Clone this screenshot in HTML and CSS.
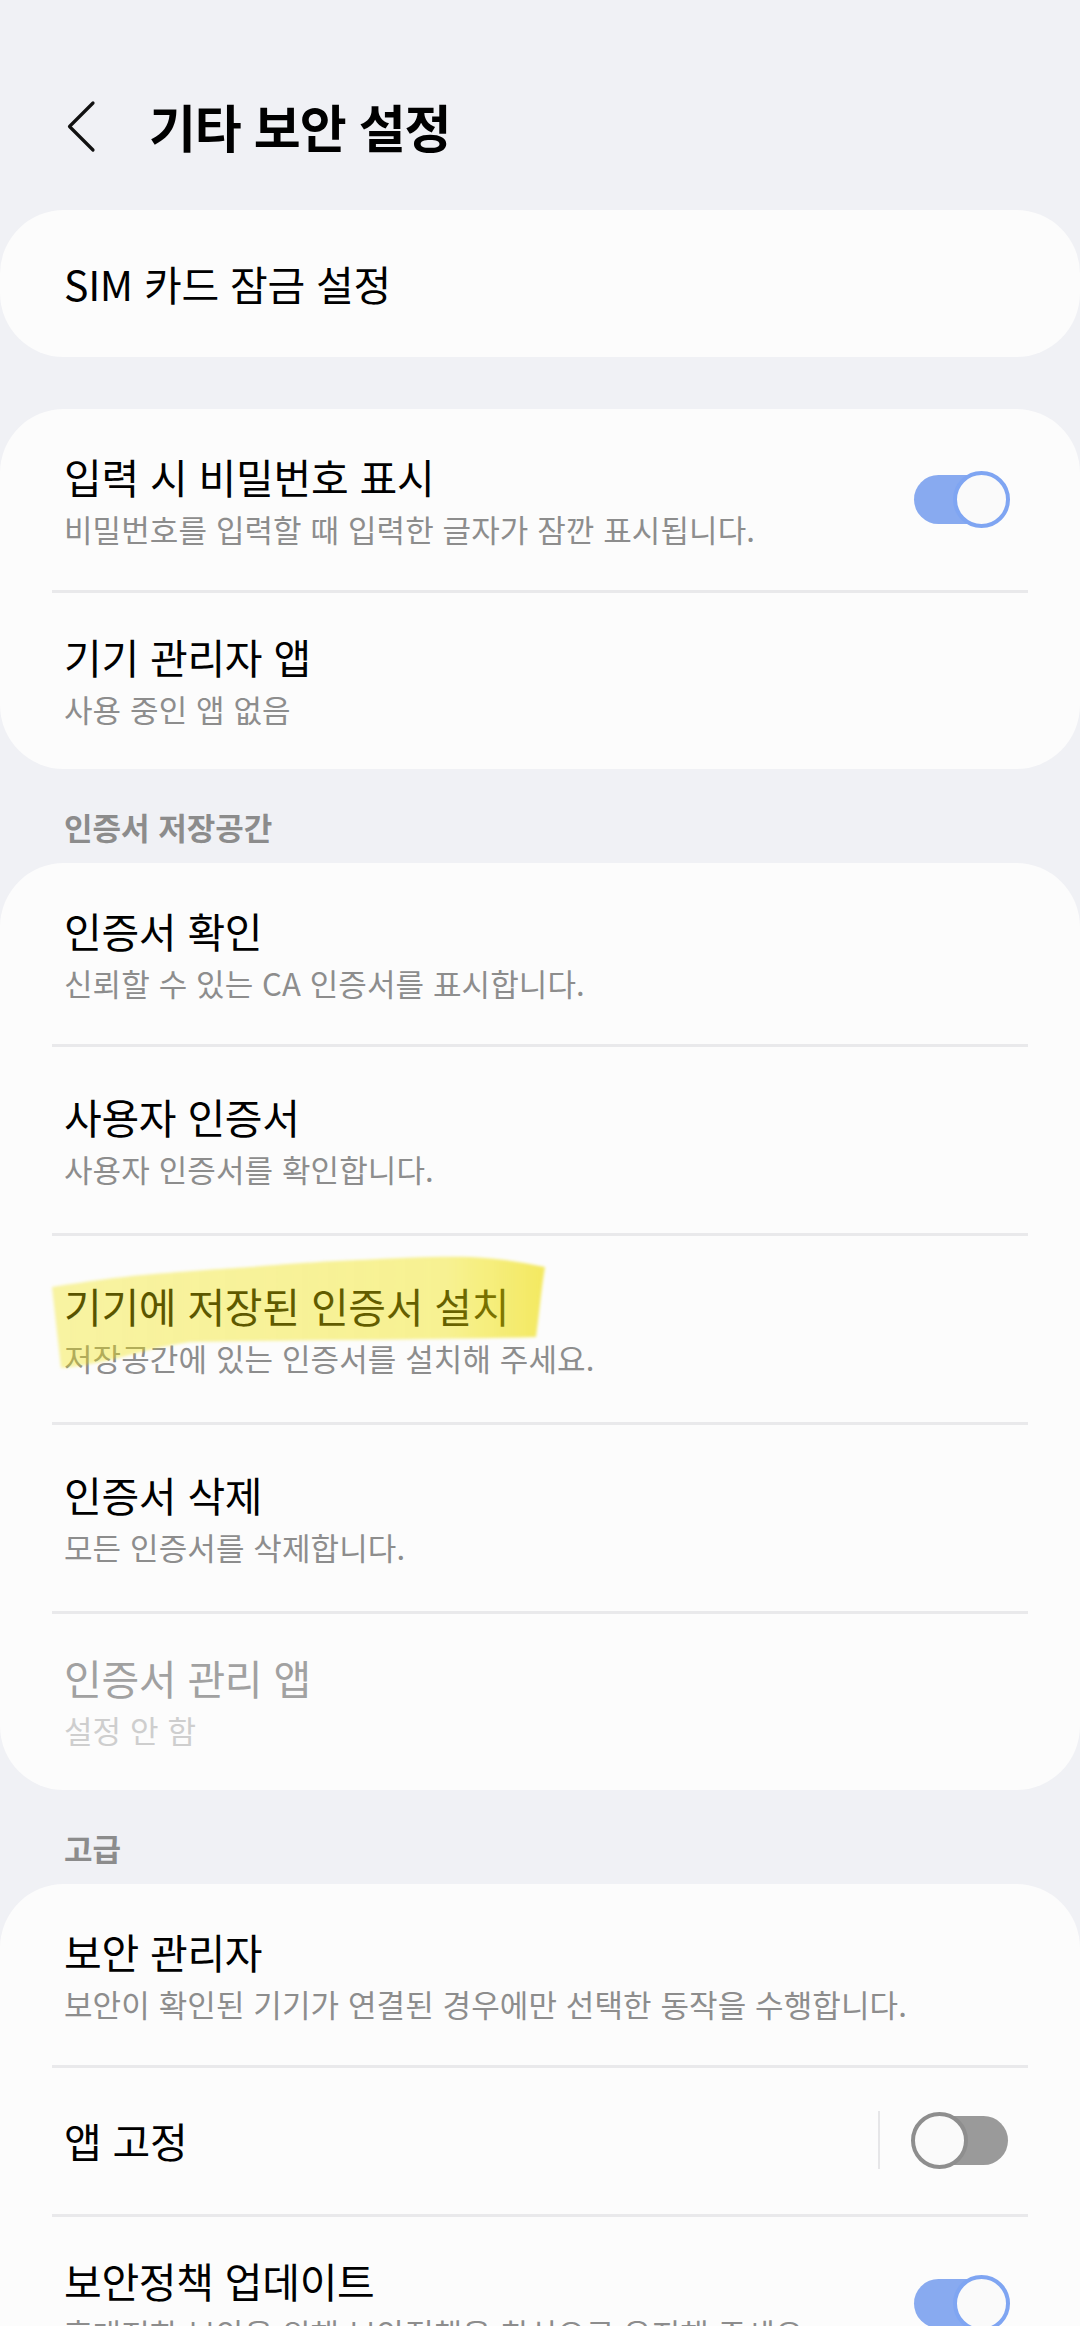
FILE: index.html
```html
<!DOCTYPE html>
<html lang="ko">
<head>
<meta charset="utf-8">
<title>기타 보안 설정</title>
<link rel="stylesheet" href="styles.css">
</head>
<body>
<div class="page">
  <header class="appbar">
    <svg class="back" width="30" height="53" viewBox="0 0 30 53" aria-hidden="true">
      <path d="M26 3 L2.5 26.5 L26 50" fill="none" stroke="#111" stroke-width="3.2" stroke-linecap="round" stroke-linejoin="round"/>
    </svg>
    <h1 class="appbar-title">기타 보안 설정</h1>
  </header>

  <section class="card">
    <div class="row row--solo">
      <div class="row-text"><div class="row-title">SIM 카드 잠금 설정</div></div>
    </div>
  </section>

  <section class="card card--gap">
    <div class="row">
      <div class="row-text">
        <div class="row-title">입력 시 비밀번호 표시</div>
        <div class="row-sub">비밀번호를 입력할 때 입력한 글자가 잠깐 표시됩니다.</div>
      </div>
      <div class="switch switch--on"><span class="track"></span><span class="knob"></span></div>
    </div>
    <div class="divider"></div>
    <div class="row">
      <div class="row-text">
        <div class="row-title">기기 관리자 앱</div>
        <div class="row-sub">사용 중인 앱 없음</div>
      </div>
    </div>
  </section>

  <h2 class="section-label">인증서 저장공간</h2>
  <section class="card">
    <div class="row">
      <div class="row-text">
        <div class="row-title">인증서 확인</div>
        <div class="row-sub">신뢰할 수 있는 CA 인증서를 표시합니다.</div>
      </div>
    </div>
    <div class="divider"></div>
    <div class="row">
      <div class="row-text">
        <div class="row-title">사용자 인증서</div>
        <div class="row-sub">사용자 인증서를 확인합니다.</div>
      </div>
    </div>
    <div class="divider"></div>
    <div class="row row--marked">
      <div class="row-text">
        <div class="row-title">기기에 저장된 인증서 설치</div>
        <div class="row-sub">저장공간에 있는 인증서를 설치해 주세요.</div>
      </div>
      <svg class="marker" width="600" height="150" viewBox="0 0 600 150" aria-hidden="true">
        <defs>
          <linearGradient id="hl" x1="0" y1="0" x2="1" y2="0">
            <stop offset="0" stop-color="#f0e200" stop-opacity="0.36"/>
            <stop offset="0.8" stop-color="#f0e200" stop-opacity="0.42"/>
            <stop offset="1" stop-color="#eedd00" stop-opacity="0.62"/>
          </linearGradient>
          <filter id="soft" x="-5%" y="-10%" width="110%" height="120%">
            <feGaussianBlur stdDeviation="1.4"/>
          </filter>
        </defs>
        <path d="M52 51 C 90 45, 120 41, 143 39 C 190 35, 220 33, 250 31 C 300 27, 330 25, 357 24 C 400 22, 440 20, 470 21 C 500 22, 525 27, 545 31 C 541 55, 539 80, 536 101 C 420 104, 300 104, 190 106 C 160 110, 135 118, 110 124 C 92 128, 75 131, 61 132 C 58 105, 55 78, 52 51 Z" fill="url(#hl)" filter="url(#soft)"/>
      </svg>
    </div>
    <div class="divider"></div>
    <div class="row">
      <div class="row-text">
        <div class="row-title">인증서 삭제</div>
        <div class="row-sub">모든 인증서를 삭제합니다.</div>
      </div>
    </div>
    <div class="divider"></div>
    <div class="row row--disabled">
      <div class="row-text">
        <div class="row-title">인증서 관리 앱</div>
        <div class="row-sub">설정 안 함</div>
      </div>
    </div>
  </section>

  <h2 class="section-label">고급</h2>
  <section class="card">
    <div class="row">
      <div class="row-text">
        <div class="row-title">보안 관리자</div>
        <div class="row-sub">보안이 확인된 기기가 연결된 경우에만 선택한 동작을 수행합니다.</div>
      </div>
    </div>
    <div class="divider"></div>
    <div class="row row--single">
      <div class="row-text"><div class="row-title">앱 고정</div></div>
      <span class="vsep"></span>
      <div class="switch"><span class="track"></span><span class="knob"></span></div>
    </div>
    <div class="divider"></div>
    <div class="row">
      <div class="row-text">
        <div class="row-title">보안정책 업데이트</div>
        <div class="row-sub">휴대전화 보안을 위해 보안정책을 최신으로 유지해 주세요.</div>
      </div>
      <div class="switch switch--on"><span class="track"></span><span class="knob"></span></div>
    </div>
  </section>
</div>
</body>
</html>
```

FILE: styles.css
```css
html {
  overflow: hidden;
}

body {
  margin: 0;
  background: #f0f1f5;
  font-family: "Noto Sans CJK KR", "Noto Sans", sans-serif;
  color: #000;
}

.page {
  width: 1080px;
}

.appbar {
  display: flex;
  align-items: center;
  height: 60px;
  padding: 96px 0 0 67px;
}

.back {
  display: block;
  margin-right: 52px;
}

.appbar-title {
  margin: 0;
  font-size: 51px;
  line-height: 60px;
  font-weight: 700;
  letter-spacing: -1.1px;
}

.card {
  background: #fcfcfc;
  border-radius: 64px;
  margin-top: 54px;
  overflow: visible;
}

.card--gap {
  margin-top: 52px;
}

.section-label {
  margin: 36px 0 14px 64px;
  font-size: 31px;
  line-height: 44px;
  font-weight: 700;
  color: #8c8c8c;
  letter-spacing: 0;
}

.section-label + .card {
  margin-top: 0;
}

.row {
  display: flex;
  align-items: center;
  padding: 41px 70px 42px 64px;
}

.row:first-child {
  padding-top: 39px;
  padding-bottom: 39px;
}

.row:last-child {
  padding-top: 35px;
  padding-bottom: 38px;
}

.row.row--single {
  padding-top: 43px;
  padding-bottom: 45px;
}

.row.row--solo {
  padding-top: 45px;
  padding-bottom: 46px;
}

.row-text {
  flex: 1;
  min-width: 0;
}

.row-title {
  font-size: 41px;
  line-height: 56px;
  letter-spacing: -0.3px;
  white-space: nowrap;
}

.row-sub {
  margin-top: 3px;
  font-size: 31px;
  line-height: 44px;
  letter-spacing: 0.1px;
  color: #8d8d8d;
  white-space: nowrap;
}

.row--disabled .row-title {
  color: #a1a1a1;
}

.row--disabled .row-sub {
  color: #cecece;
}

.row--marked {
  position: relative;
}

.marker {
  position: absolute;
  left: 0;
  top: 0;
  pointer-events: none;
}

.divider {
  height: 3px;
  margin: 0 52px;
  background: #e9e9eb;
}

.vsep {
  width: 2px;
  height: 58px;
  background: #e6e6e8;
  margin-right: 31px;
}

.switch {
  position: relative;
  width: 99px;
  height: 57px;
  flex: none;
}

.switch .track {
  position: absolute;
  left: 3px;
  right: 2px;
  top: 4px;
  height: 49px;
  border-radius: 25px;
  background: #9a9a9a;
}

.switch .knob {
  position: absolute;
  top: 0;
  left: 0;
  width: 57px;
  height: 57px;
  box-sizing: border-box;
  border-radius: 50%;
  border: 4px solid #8e8e8e;
  background: #fafafa;
}

.switch--on .track {
  background: #88aaf0;
}

.switch--on .knob {
  left: auto;
  right: 0;
  border-color: #7fa5f2;
}
```
